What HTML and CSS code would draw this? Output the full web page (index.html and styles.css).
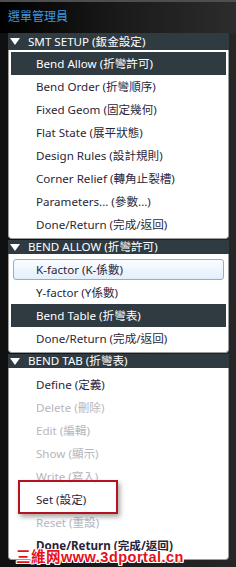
FILE: index.html
```html
<!DOCTYPE html>
<html>
<head>
<meta charset="utf-8">
<link rel="stylesheet" href="styles.css">
</head>
<body>
<div class="frame">
  <div class="title">選單管理員</div>
  <div class="content">
    <div class="hdr hdr1"><span class="tri"></span>SMT SETUP (鈑金設定)</div>
    <ul class="list l1">
      <li class="sel">Bend Allow (折彎許可)</li>
      <li>Bend Order (折彎順序)</li>
      <li>Fixed Geom (固定幾何)</li>
      <li>Flat State (展平狀態)</li>
      <li>Design Rules (設計規則)</li>
      <li>Corner Relief (轉角止裂槽)</li>
      <li>Parameters... (參數...)</li>
      <li>Done/Return (完成/返回)</li>
    </ul>
    <div class="hdr"><span class="tri"></span>BEND ALLOW (折彎許可)</div>
    <ul class="list l2">
      <li class="hl">K-factor (K-係數)</li>
      <li>Y-factor (Y係數)</li>
      <li class="sel">Bend Table (折彎表)</li>
      <li>Done/Return (完成/返回)</li>
    </ul>
    <div class="hdr"><span class="tri"></span>BEND TAB (折彎表)</div>
    <ul class="list l3">
      <li>Define (定義)</li>
      <li class="dis">Delete (刪除)</li>
      <li class="dis">Edit (編輯)</li>
      <li class="dis">Show (顯示)</li>
      <li class="dis">Write (寫入)</li>
      <li>Set (設定)</li>
      <li class="dis">Reset (重設)</li>
      <li class="bold">Done/Return (完成/返回)</li>
    </ul>
  </div>
  <div class="mark"></div>
  <div class="wm">三維网www.3dportal.cn</div>
</div>
</body>
</html>
```
FILE: styles.css
```css
body {
  margin: 0;
  background: #111;
}
.frame {
  position: relative;
  width: 236px;
  height: 567px;
  box-sizing: border-box;
  border-top: 2px solid #4e4e4e;
  background: linear-gradient(90deg, #101010, #1e1e1e 60%, #262626);
  font-family: "Noto Sans", "Noto Sans CJK TC", sans-serif;
  font-size: 11.6px;
  overflow: hidden;
}
.title {
  height: 31px;
  box-sizing: border-box;
  padding: 6px 0 0 8px;
  line-height: 18px;
  font-size: 12px;
  color: #3d98e4;
  background: linear-gradient(90deg, #000, #1a1a1a 50%, #2c2c2c);
}
.content {
  padding: 0 7px 0 8px;
}
.hdr {
  height: 14px;
  margin-top: 1px;
  background: #2f3b41;
  color: #fff;
  display: flex;
  align-items: center;
  padding-left: 2px;
  gap: 8px;
  line-height: 14px;
}
.hdr1 {
  height: 17px;
  margin-top: 0;
}
.tri {
  width: 0;
  height: 0;
  border-left: 5.5px solid transparent;
  border-right: 5.5px solid transparent;
  border-top: 7px solid #fff;
}
.list {
  margin: 0;
  padding: 2px 2px;
  list-style: none;
  background: #fff;
  border: 1px solid #9c9c9c;
  border-top: none;
  border-radius: 0 0 4px 4px;
}
.l2 { padding-top: 4px; }
.l3 { padding-top: 5px; }
.list li {
  height: 23px;
  line-height: 23px;
  box-sizing: border-box;
  padding-left: 25px;
  color: #2b1f3a;
  white-space: nowrap;
}
.list li.sel {
  background: #2f3b41;
  color: #fff;
}
.list li.hl {
  height: 21px;
  line-height: 19px;
  margin: 1px 2px;
  padding-left: 22px;
  border: 1px solid #7db3e8;
  border-radius: 3px;
  background: linear-gradient(#fbfdff, #e2effb);
}
.list li.dis {
  color: #b6b6be;
}
.list li.bold {
  font-weight: bold;
}
.mark {
  position: absolute;
  left: 18px;
  top: 478px;
  width: 100px;
  height: 34px;
  box-sizing: border-box;
  border: 2px solid #b3121f;
  box-shadow: 2px 3px 5px rgba(0, 0, 0, 0.35);
}
.wm {
  position: absolute;
  left: 16px;
  top: 543px;
  font-family: "Liberation Sans", "Noto Sans CJK SC", sans-serif;
  font-weight: bold;
  font-size: 14.5px;
  letter-spacing: 0.5px;
  color: #e8101a;
  text-shadow: 1px 0 #fff, -1px 0 #fff, 0 1px #fff, 0 -1px #fff, 1px 1px #fff, -1px -1px #fff, 1px -1px #fff, -1px 1px #fff;
  white-space: nowrap;
}
```
